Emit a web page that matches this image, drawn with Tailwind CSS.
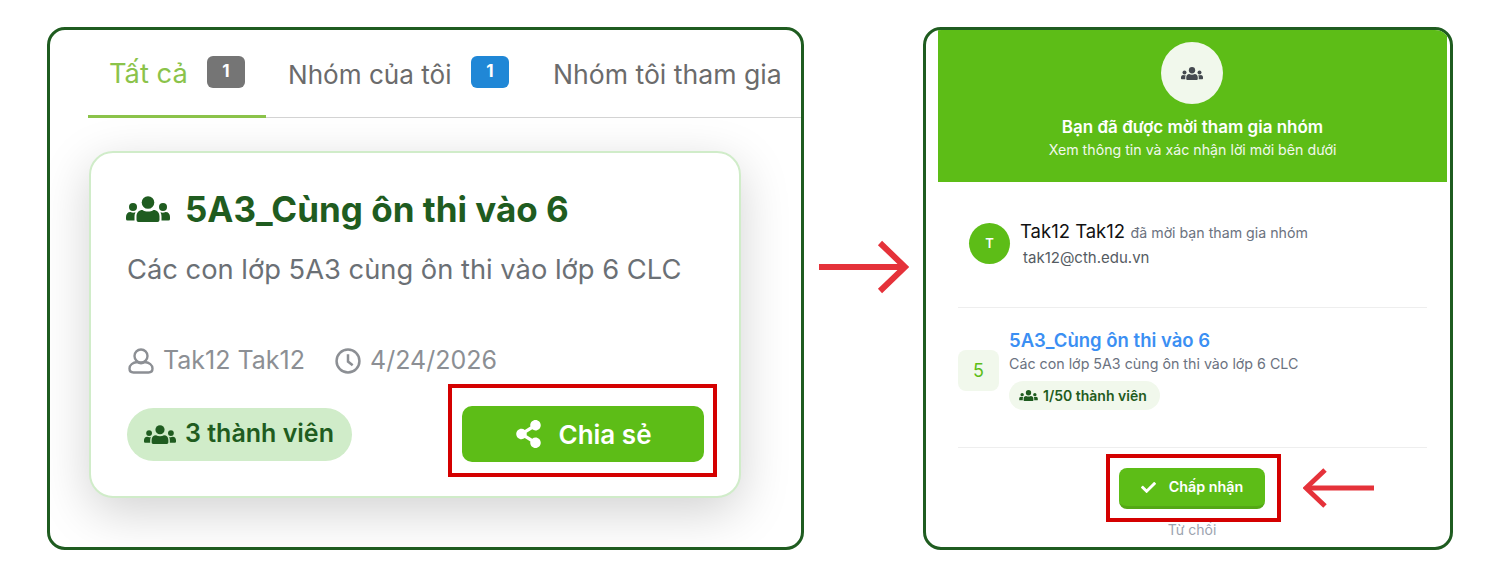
<!DOCTYPE html>
<html lang="en">
<head>
    <meta charset="UTF-8">
    <meta name="viewport" content="width=device-width, initial-scale=1.0">
    <title>Mời tham gia nhóm</title>
    <script src="https://cdn.jsdelivr.net/npm/@tailwindcss/browser@4"></script>
</head>
<body class="bg-white font-['Inter','Noto_Sans',sans-serif]">
    <svg class="hidden">
        <symbol id="users" viewBox="0 0 44 26">
            <g fill="currentColor">
                <circle cx="22" cy="6.500" r="6.300"/>
                <circle cx="7" cy="11" r="4"/>
                <circle cx="37" cy="11" r="4"/>
                <path d="M12.500 26a2 2 0 0 1-2-2v-3.500c0-4 2.500-6.500 6-6.500 1.500 1 3.500 1.500 5.500 1.500s4-.5 5.500-1.500c3.500 0 6 2.500 6 6.500V24a2 2 0 0 1-2 2z"/>
                <path d="M1.500 24.500A1.500 1.500 0 0 1 0 23v-2c0-3 1.500-5 4.500-5 1.500.8 3.500.8 5 .3-.7 1.300-1 2.700-1 4.200v4z"/>
                <path d="M42.500 24.500A1.500 1.500 0 0 0 44 23v-2c0-3-1.500-5-4.500-5-1.500.8-3.500.8-5 .3.700 1.300 1 2.700 1 4.200v4z"/>
            </g>
        </symbol>
    </svg>

    <div class="flex w-[1500px] h-[582px] pl-[47px] pt-[27px] overflow-hidden">
        <!-- left panel -->
        <div class="relative w-[757px] h-[523px] shrink-0 border-[3px] border-[#1f5c20] rounded-[18px] overflow-hidden bg-white">
            <div class="flex ml-[38px] h-[88px] border-b border-[#d4d4d4] text-[26.6px] text-[#6b6b6b]">
                <div class="flex items-center gap-[20px] h-[88px] w-[178px] pl-[21px] pb-[2px] border-b-[3px] border-[#8bc34a] text-[#8bc34a]">
                    <span class="mt-[6px] w-[78px] text-[27.3px] whitespace-nowrap">Tất cả</span>
                    <span class="w-[38px] h-[32px] rounded-[6px] bg-[#757575] text-white text-[17px] font-bold flex items-center justify-center">1</span>
                </div>
                <div class="flex items-center gap-[19px] h-[88px] pl-[22px] pb-[4px]">
                    <span class="mt-[6px] w-[164px] text-[26.1px] whitespace-nowrap">Nhóm của tôi</span>
                    <span class="w-[38px] h-[32px] rounded-[6px] bg-[#2087d6] text-white text-[17px] font-bold flex items-center justify-center">1</span>
                </div>
                <div class="flex items-center h-[88px] pl-[44px] pt-[2px] whitespace-nowrap">Nhóm tôi tham gia</div>
            </div>

            <div class="relative ml-[39px] mt-[33px] w-[652px] h-[347px] border-2 border-[#d0ecc9] rounded-[24px] bg-white shadow-[0_14px_50px_rgba(0,0,0,0.18)] pl-[35px] pr-[35px]">
                <div class="flex items-center gap-[15px] mt-[36px] h-[40px] text-[#1f5c20]">
                    <svg class="w-[44px] h-[26px] shrink-0"><use href="#users"/></svg>
                    <h1 class="text-[35px] font-bold whitespace-nowrap">5A3_Cùng ôn thi vào 6</h1>
                </div>
                <p class="ml-[1px] mt-[23px] h-[36px] leading-[36px] text-[27.3px] text-[#6b7075] whitespace-nowrap">Các con lớp 5A3 cùng ôn thi vào lớp 6 CLC</p>
                <div class="flex items-center mt-[55px] h-[36px] text-[25px] text-[#8c8f94]">
                    <svg class="ml-[2px] w-[26px] h-[26px] shrink-0" viewBox="0 0 26 26" fill="none" stroke="currentColor" stroke-width="2.400"><circle cx="13" cy="8" r="6.500"/><path d="M9 14c-4 .5-7.500 3-7.500 6.500 0 2.500 1.500 4 4 4h15c2.500 0 4-1.500 4-4 0-3.500-3.500-6-7.500-6.500-2.500 1.500-5.500 1.500-8 0z"/></svg>
                    <span class="ml-[9px] w-[141px] whitespace-nowrap">Tak12 Tak12</span>
                    <svg class="ml-[31px] w-[26px] h-[26px] shrink-0" viewBox="0 0 25 25" fill="none" stroke="currentColor" stroke-width="2.400"><circle cx="12.500" cy="12.500" r="11"/><path d="M12.500 6v7l4.500 3.500"/></svg>
                    <span class="ml-[9px] whitespace-nowrap">4/24/2026</span>
                </div>
                <div class="flex items-center justify-between mt-[27px] pl-[1px]">
                    <div class="flex items-center gap-[9px] w-[225px] h-[53px] pl-[17px] rounded-full bg-[#d0ecc9] text-[#1f5c20] text-[25px] font-semibold">
                        <svg class="w-[32px] h-[19px] shrink-0"><use href="#users"/></svg>
                        <span class="whitespace-nowrap">3 thành viên</span>
                    </div>
                    <button class="flex items-center justify-center gap-[17px] w-[242px] h-[56px] pl-[2px] rounded-[10px] bg-[#5dbd17] text-white text-[26px] font-semibold">
                        <svg class="w-[25px] h-[28px]" viewBox="0 0 448 512"><path fill="currentColor" d="M352 320c-22.608 0-43.387 7.819-59.79 20.895l-102.486-64.054a96.551 96.551 0 0 0 0-41.683l102.486-64.054C308.613 184.181 329.392 192 352 192c53.019 0 96-42.981 96-96S405.019 0 352 0s-96 42.981-96 96c0 7.158.79 14.13 2.276 20.841L155.79 180.895C139.387 167.819 118.608 160 96 160c-53.019 0-96 42.981-96 96s42.981 96 96 96c22.608 0 43.387-7.819 59.79-20.895l102.486 64.054A96.301 96.301 0 0 0 256 416c0 53.019 42.981 96 96 96s96-42.981 96-96-42.981-96-96-96z"/></svg>
                        <span class="whitespace-nowrap">Chia sẻ</span>
                    </button>
                </div>
                <div class="absolute left-[357px] top-[231px] w-[269px] h-[93px] border-4 border-[#d40000]"></div>
            </div>
        </div>

        <!-- arrow -->
        <div class="w-[119px] shrink-0 pl-[15px] pt-[213px]">
            <svg class="w-[90px] h-[54px]" viewBox="0 0 90 54" fill="none" stroke="#e5323a" stroke-width="6"><path d="M0 27h83"/><path d="M61 3l25 24-25 24"/></svg>
        </div>

        <!-- right panel -->
        <div class="relative w-[530px] h-[523px] shrink-0 border-[3px] border-[#1f5c20] rounded-[18px] overflow-hidden bg-white">
            <div class="ml-[12px] mr-[3px] h-[152px] bg-[#5dbd17] pt-[12px] flex flex-col items-center text-white">
                <div class="-ml-[1px] w-[62px] h-[62px] rounded-full bg-[#f1f8ec] flex items-center justify-center text-[#454a50]">
                    <svg class="w-[22px] h-[13px]"><use href="#users"/></svg>
                </div>
                <h2 class="mt-[12px] text-[17px] leading-[22px] font-semibold whitespace-nowrap">Bạn đã được mời tham gia nhóm</h2>
                <p class="mt-[2px] text-[14.2px] leading-[20px] whitespace-nowrap text-[#f1f8ec]">Xem thông tin và xác nhận lời mời bên dưới</p>
            </div>

            <div class="ml-[32px] mr-[23px]">
                <div class="flex items-start h-[126px] pt-[37px] pl-[11px] border-b border-[#eeeeee]">
                    <div class="mt-[4px] w-[41px] h-[41px] rounded-full bg-[#5dbd17] text-white text-[13px] font-semibold flex items-center justify-center shrink-0">T</div>
                    <div class="ml-[10px]">
                        <div class="whitespace-nowrap leading-[24px]"><span class="text-[18.5px] text-[#111]">Tak12 Tak12</span> <span class="text-[14.2px] text-[#6b7280] ml-[1px]">đã mời bạn tham gia nhóm</span></div>
                        <div class="ml-[3px] mt-[2px] text-[15px] leading-[22px] text-[#555b62]">tak12@cth.edu.vn</div>
                    </div>
                </div>
                <div class="flex items-center h-[140px] pb-[15px] border-b border-[#eeeeee]">
                    <div class="w-[41px] h-[41px] rounded-[8px] bg-[#f1f8ec] text-[#5dbd17] text-[18px] flex items-center justify-center shrink-0">5</div>
                    <div class="ml-[10px] -mt-[3px]">
                        <div class="text-[18.5px] leading-[24px] font-semibold text-[#3b8ff3] whitespace-nowrap">5A3_Cùng ôn thi vào 6</div>
                        <div class="mt-[1px] text-[14.25px] leading-[22px] text-[#6b7280] whitespace-nowrap">Các con lớp 5A3 cùng ôn thi vào lớp 6 CLC</div>
                        <div class="mt-[6px] flex items-center gap-[5px] w-[151px] h-[29px] pl-[10px] rounded-full bg-[#f1f8ec] text-[#1f5c20] text-[14px] font-semibold">
                            <svg class="w-[19px] h-[11px] shrink-0"><use href="#users"/></svg>
                            <span class="whitespace-nowrap">1/50 thành viên</span>
                        </div>
                    </div>
                </div>
            </div>

            <div class="relative flex flex-col items-center ml-[12px] mr-[4px] pt-[20px]">
                <button class="flex items-center justify-center gap-[13px] w-[146px] h-[41px] rounded-[8px] bg-[#5dbd17] border-b-[3px] border-[#53a814] text-white text-[14.3px] font-semibold">
                    <svg class="w-[15px] h-[15px]" viewBox="0 0 512 512"><path fill="currentColor" d="M173.898 439.404l-166.4-166.4c-9.997-9.997-9.997-26.206 0-36.204l36.203-36.204c9.997-9.998 26.207-9.998 36.204 0L192 312.69 432.095 72.596c9.997-9.997 26.207-9.997 36.204 0l36.203 36.204c9.997 9.997 9.997 26.206 0 36.204l-294.4 294.401c-9.998 9.997-26.207 9.997-36.204-.001z"/></svg>
                    <span class="whitespace-nowrap">Chấp nhận</span>
                </button>
                <div class="mt-[11px] text-[14px] leading-[20px] text-[#9ca3af]">Từ chối</div>
            </div>

            <div class="absolute left-[180px] top-[424px] w-[175px] h-[68px] border-4 border-[#d40000]"></div>
            <svg class="absolute left-[377px] top-[438px] w-[72px] h-[40px]" viewBox="0 0 72 40" fill="none" stroke="#e5323a" stroke-width="5"><path d="M71 20H4"/><path d="M22 2L3 20l19 18"/></svg>
        </div>
    </div>
</body>
</html>
